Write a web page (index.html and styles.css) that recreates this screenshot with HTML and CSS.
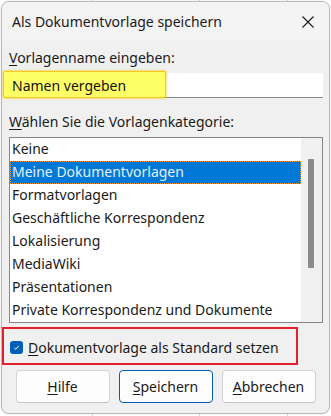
FILE: index.html
```html
<!DOCTYPE html>
<html lang="de">
<head>
<meta charset="utf-8">
<title>Als Dokumentvorlage speichern</title>
<link rel="stylesheet" href="styles.css">
</head>
<body>
<div class="backdrop">
  <div class="dialog">
    <div class="titlebar">
      <span class="title">Als Dokumentvorlage speichern</span>
      <svg class="close" width="12" height="12" viewBox="0 0 12 12"><path d="M0.5 0.5L11.5 11.5M11.5 0.5L0.5 11.5" stroke="#1a1a1a" stroke-width="1.1" fill="none"/></svg>
    </div>
    <div class="content">
      <div class="label"><u>V</u>orlagenname eingeben:</div>
      <div class="field">
        <div class="highlight"></div>
        <span class="field-text">Namen vergeben</span>
      </div>
      <div class="label label2"><u>W</u>ählen Sie die Vorlagenkategorie:</div>
      <div class="listbox">
        <ul class="items">
          <li>Keine</li>
          <li class="selected">Meine Dokumentvorlagen</li>
          <li>Formatvorlagen</li>
          <li>Geschäftliche Korrespondenz</li>
          <li>Lokalisierung</li>
          <li>MediaWiki</li>
          <li>Präsentationen</li>
          <li>Private Korrespondenz und Dokumente</li>
        </ul>
        <div class="scrollbar"><div class="thumb"></div></div>
      </div>
      <div class="check-row">
        <div class="redbox"></div>
        <span class="checkbox"><svg width="13" height="13" viewBox="0 0 13 13"><path d="M4.3 6.9L5.8 8.3L8.7 5" stroke="#fff" stroke-width="1" fill="none"/></svg></span>
        <span class="check-label"><u>D</u>okumentvorlage als Standard setzen</span>
      </div>
      <div class="buttons">
        <button class="btn"><u>H</u>ilfe</button>
        <button class="btn primary"><u>S</u>peichern</button>
        <button class="btn"><u>A</u>bbrechen</button>
      </div>
    </div>
  </div>
</div>
</body>
</html>
```
FILE: styles.css
```css
* { box-sizing: border-box; }
html, body {
  margin: 0;
  padding: 0;
  background: #ffffff;
}
body {
  font-family: "Noto Sans", "Open Sans", sans-serif;
  font-size: 14px;
  color: #1a1a1a;
  width: 331px;
  height: 416px;
  overflow: hidden;
}
.backdrop {
  width: 331px;
  height: 416px;
  padding: 1px 0 0 1px;
  background-color: #ffffff;
  background-image:
    linear-gradient(to right, transparent 92px, #d9d9d9 92px, #d9d9d9 93px, transparent 93px),
    linear-gradient(to right, transparent 199px, #d9d9d9 199px, #d9d9d9 200px, transparent 200px),
    linear-gradient(to right, transparent 287px, #d9d9d9 287px, #d9d9d9 288px, transparent 288px);
}
.dialog {
  width: 329px;
  height: 413px;
  border: 1px solid #b9b9b9;
  border-radius: 8px;
  background: #f0f0f0;
  overflow: hidden;
  display: flex;
  flex-direction: column;
  box-shadow: 0 0 2px rgba(0,0,0,0.15);
}
.titlebar {
  height: 39px;
  flex: none;
  background: #f3f3f3;
  display: flex;
  align-items: center;
  padding: 0 15px 0 10px;
}
.title {
  flex: 1;
  font-size: 14px;
  color: #1a1a1a;
}
.close { display: block; }
.content {
  flex: 1;
  display: flex;
  flex-direction: column;
  padding: 7px 6px 0 7px;
}
.label {
  line-height: 20px;
  height: 20px;
  color: #1a1a1a;
}
.label u, .btn u, .check-label u { text-decoration-thickness: 1px; text-underline-offset: 2px; }
.field {
  position: relative;
  margin-top: 5px;
  height: 25px;
  background: #ffffff;
  border-bottom: 1px solid #8a8a8a;
  display: flex;
  align-items: center;
  padding-left: 3px;
}
.highlight {
  position: absolute;
  left: -6px;
  top: -2px;
  width: 163px;
  height: 27px;
  background: #ffff66;
  border: 1px solid #f3c81a;
  border-radius: 2px;
  box-shadow: 0 0 2px 1px rgba(245, 200, 30, 0.55);
}
.field-text {
  position: relative;
  color: #111;
  padding-top: 1px;
}
.label2 { margin-top: 14px; }
.listbox {
  margin-top: 5px;
  height: 186px;
  border: 1px solid #858585;
  background: #ffffff;
  display: flex;
}
.items {
  list-style: none;
  margin: 0;
  padding: 0;
  flex: 1;
}
.items li {
  height: 23px;
  line-height: 22px;
  padding-left: 2px;
  color: #1a1a1a;
  white-space: nowrap;
}
.items li.selected {
  background: #0078d7;
  color: #e6f0fa;
  outline: 1px dotted #f39a32;
  outline-offset: -1px;
}
.scrollbar {
  width: 21px;
  flex: none;
  background: #f0f0f0;
  padding: 21px 0 0 7px;
}
.thumb {
  width: 6px;
  height: 109px;
  background: #8b8b8b;
  border-radius: 1px;
}
.check-row {
  position: relative;
  margin-top: 12px;
  height: 24px;
  display: flex;
  align-items: center;
  padding-left: 1px;
}
.redbox {
  position: absolute;
  left: -7px;
  top: -8px;
  width: 296px;
  height: 38px;
  border: 2px solid #e5202e;
  pointer-events: none;
}
.checkbox {
  width: 13px;
  height: 13px;
  border-radius: 3px;
  background: #005fb8;
  display: block;
  flex: none;
}
.checkbox svg { display: block; }
.check-label {
  margin-left: 5px;
  color: #1a1a1a;
}
.buttons {
  margin-top: 11px;
  display: flex;
  justify-content: center;
  gap: 9px;
  padding-right: 1px;
}
.btn {
  width: 94px;
  height: 33px;
  font-family: "Noto Sans", "Open Sans", sans-serif;
  font-size: 14px;
  color: #1a1a1a;
  background: #fdfdfd;
  border: 1px solid #d3d3d3;
  border-bottom-color: #c4c4c4;
  border-radius: 4px;
  padding: 0;
}
.btn.primary {
  border: 1px solid #005fb8;
}
```
